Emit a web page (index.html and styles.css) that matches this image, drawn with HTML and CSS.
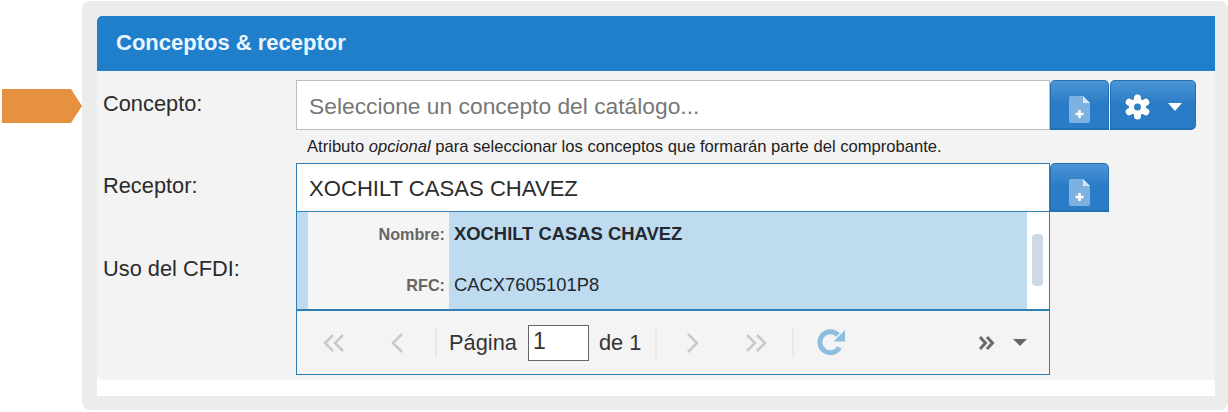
FILE: index.html
```html
<!DOCTYPE html>
<html lang="es-MX">

    <head>

        <meta charset="UTF-8">
        <meta name="viewport" content="width=device-width, initial-scale=1.0">

        <title>Conceptos &amp; receptor</title>

        <link rel="stylesheet" href="styles.css">

    </head>

    <body>

        <div class="arrow"></div>

        <div class="outer">

            <div class="panel">

                <div class="panel-header">Conceptos &amp; receptor</div>

                <div class="panel-body">

                    <div class="row row-concepto">
                        <label class="row-label">Concepto:</label>
                        <div class="input-group">
                            <div class="text-input placeholder">Seleccione un concepto del catálogo...</div>
                            <button class="btn btn-file" type="button">
                                <svg width="21" height="27" viewBox="0 0 21 27"><path d="M2 0H14L21 7V25Q21 27 19 27H2Q0 27 0 25V2Q0 0 2 0Z" fill="#7DB1DF"/><path d="M14 0L21 7H14Z" fill="#D5E6F5"/><path d="M10.5 14V22M6.500 18H14.500" stroke="#fff" stroke-width="2.600" fill="none"/></svg>
                            </button>
                            <button class="btn btn-gear" type="button">
                                <svg width="27" height="26" viewBox="0 0 27 26"><path d="M13.500 4V22M5.200 8.200L21.800 17.800M21.800 8.200L5.200 17.800" stroke="#fff" stroke-width="7" stroke-linecap="round"/><circle cx="13.500" cy="13" r="8.500" fill="#fff"/><circle cx="13.500" cy="13" r="3.500" fill="#2F7FC6"/></svg>
                                <span class="caret caret-white"></span>
                            </button>
                        </div>
                    </div>

                    <p class="hint">Atributo <em>opcional</em> para seleccionar los conceptos que formarán parte del comprobante.</p>

                    <div class="row row-receptor">
                        <label class="row-label">Receptor:</label>
                        <div class="input-group">
                            <div class="text-input text-active">XOCHILT CASAS CHAVEZ</div>
                            <button class="btn btn-file" type="button">
                                <svg width="21" height="27" viewBox="0 0 21 27"><path d="M2 0H14L21 7V25Q21 27 19 27H2Q0 27 0 25V2Q0 0 2 0Z" fill="#7DB1DF"/><path d="M14 0L21 7H14Z" fill="#D5E6F5"/><path d="M10.5 14V22M6.500 18H14.500" stroke="#fff" stroke-width="2.600" fill="none"/></svg>
                            </button>

                            <div class="dropdown">
                                <div class="dropdown-list">
                                    <div class="dropdown-strip"></div>
                                    <div class="dropdown-keys">
                                        <span class="key">Nombre:</span>
                                        <span class="key key-rfc">RFC:</span>
                                    </div>
                                    <div class="dropdown-values">
                                        <span class="value value-name">XOCHILT CASAS CHAVEZ</span>
                                        <span class="value value-rfc">CACX7605101P8</span>
                                    </div>
                                    <div class="scrollbar"><div class="scroll-thumb"></div></div>
                                </div>
                                <div class="pager">
                                    <svg class="pg pg-first" width="22" height="20" viewBox="0 0 22 20"><path d="M10 2L2 10L10 18M20 2L12 10L20 18" class="chev"/></svg>
                                    <svg class="pg pg-prev" width="15" height="22" viewBox="0 0 15 22"><path d="M12 2L3 11L12 20" class="chev"/></svg>
                                    <span class="pg-sep sep-one"></span>
                                    <span class="pg-text">Página</span>
                                    <div class="pg-input">1</div>
                                    <span class="pg-text pg-de">de 1</span>
                                    <span class="pg-sep sep-two"></span>
                                    <svg class="pg pg-next" width="15" height="22" viewBox="0 0 15 22"><path d="M3 2L12 11L3 20" class="chev"/></svg>
                                    <svg class="pg pg-last" width="22" height="20" viewBox="0 0 22 20"><path d="M2 2L10 10L2 18M12 2L20 10L12 18" class="chev"/></svg>
                                    <span class="pg-sep sep-three"></span>
                                    <svg class="pg pg-refresh" width="29" height="27" viewBox="0 0 29 27"><path d="M22.500 18.500A10.500 10.500 0 1 1 21 6" fill="none" stroke="#8DBEDF" stroke-width="5"/><path d="M28 1V12.500H16.500Z" fill="#8DBEDF"/></svg>
                                    <svg class="pg pg-more" width="17" height="16" viewBox="0 0 17 16"><path d="M2 2L7.500 8L2 14M9 2L14.500 8L9 14" fill="none" stroke="#6A6A6A" stroke-width="3"/></svg>
                                    <span class="caret caret-gray"></span>
                                </div>
                            </div>
                        </div>
                    </div>

                    <div class="row row-uso">
                        <label class="row-label">Uso del CFDI:</label>
                    </div>

                </div>

            </div>

        </div>

    </body>

</html>
```

FILE: styles.css
```css
* {
    box-sizing: border-box;
}

body {
    background-color: #fff;
    font-family: "Liberation Sans", Arial, sans-serif;
    margin: 0;
    padding: 1px 0 0 2px;
    display: flex;
    align-items: flex-start;
    width: 1228px;
    height: 412px;
    overflow: hidden;
}

.arrow {
    width: 80px;
    height: 34px;
    margin-top: 88px;
    flex-shrink: 0;
    background-color: #E69140;
    clip-path: polygon(0 0, 69px 0, 100% 50%, 69px 100%, 0 100%);
}

.outer {
    flex: 1;
    height: 409px;
    padding: 15px 13px 14px 15px;
    background-color: #ECECEC;
    border-radius: 8px;
}

.panel {
    height: 380px;
    background-color: #fff;
}

.panel-header {
    height: 55px;
    padding-left: 19px;
    background-color: #1F7FCB;
    border-radius: 5px 0 0 0;
    color: #EAF6FF;
    font-size: 22px;
    font-weight: bold;
    line-height: 54px;
}

.panel-body {
    height: 309px;
    padding-top: 9px;
    background-color: #F3F3F3;
    border-radius: 0 0 0 5px;
}

.row {
    display: flex;
    align-items: flex-start;
}

.row-label {
    width: 199px;
    padding-left: 6px;
    color: #2B2B2B;
    font-size: 21.800px;
    line-height: 26px;
}

.row-concepto .row-label {
    padding-top: 11px;
}

.row-receptor .row-label {
    padding-top: 10px;
}

.row-uso {
    margin-top: 44px;
}

.input-group {
    position: relative;
    display: flex;
}

.text-input {
    width: 754px;
    padding-left: 12px;
    background-color: #fff;
}

.placeholder {
    height: 50px;
    border: 1px solid #BDBDBD;
    color: #777;
    font-size: 22.800px;
    line-height: 50px;
}

.text-active {
    height: 49px;
    border: 1px solid #2E7FB5;
    color: #2B2B2B;
    font-size: 22.100px;
    line-height: 50px;
}

.btn {
    display: flex;
    align-items: center;
    justify-content: center;
    padding: 0;
    background: linear-gradient(#4B94D6, #2A7BC5 50%, #2A7DC8);
    border: 1px solid #236FB1;
    border-bottom-width: 2px;
    border-radius: 5px 5px 0 0;
}

.btn-file {
    width: 59px;
    height: 50px;
    padding-top: 10px;
}

.row-receptor .btn-file {
    height: 49px;
}

.btn-gear {
    width: 86px;
    height: 50px;
    margin-left: 1px;
    gap: 17px;
    padding-top: 5px;
    border-radius: 5px 5px 5px 0;
}

.caret {
    display: block;
    width: 0;
    height: 0;
    border-left: 7px solid transparent;
    border-right: 7px solid transparent;
}

.caret-white {
    border-top: 8px solid #fff;
}

.caret-gray {
    border-top: 7px solid #666;
    margin-left: 18px;
}

.hint {
    margin: 7px 0 0 210px;
    height: 26px;
    color: #222;
    font-size: 16.600px;
    line-height: 20px;
}

/* lista del combo, queda encima de la fila de uso */
.dropdown {
    position: absolute;
    top: 48px;
    left: 0;
    width: 754px;
    height: 164px;
    display: flex;
    flex-direction: column;
    border: 1px solid #2E7FB5;
    background-color: #fff;
}

.dropdown-list {
    display: flex;
    height: 99px;
    border-bottom: 2px solid #2E7FB5;
}

.dropdown-strip {
    width: 11px;
    background-color: #BEDBF0;
}

.dropdown-keys {
    width: 141px;
    background-color: #F5F5F5;
    display: flex;
    flex-direction: column;
    align-items: flex-end;
    padding: 12px 4px 0 0;
}

.key {
    color: #666;
    font-size: 16.200px;
    font-weight: bold;
    line-height: 20px;
}

.key-rfc {
    margin-top: 31px;
}

.dropdown-values {
    width: 578px;
    background-color: #BEDBF0;
    display: flex;
    flex-direction: column;
    padding: 10px 0 0 5px;
}

.value {
    color: #24292F;
    font-size: 18.400px;
    line-height: 24px;
}

.value-name {
    font-weight: bold;
}

.value-rfc {
    margin-top: 27px;
}

.scrollbar {
    flex: 1;
    padding: 22px 6px 0 5px;
}

.scroll-thumb {
    height: 52px;
    background-color: #CDD9E5;
    border-radius: 4px;
}

.pager {
    flex: 1;
    display: flex;
    align-items: center;
    background-color: #F4F4F4;
    padding-left: 26px;
}

.chev {
    fill: none;
    stroke: #C9C9C9;
    stroke-width: 2.500;
}

.pg {
    flex-shrink: 0;
}

.pg-prev {
    margin-left: 45px;
}

.pg-sep {
    width: 2px;
    height: 30px;
    background-color: #E9E9E9;
}

.sep-one {
    margin-left: 30px;
}

.pg-text {
    color: #333;
    font-size: 21.800px;
    margin-left: 12px;
}

.pg-input {
    width: 61px;
    height: 36px;
    margin-left: 11px;
    padding-left: 4px;
    background-color: #fff;
    border: 1px solid #666;
    color: #333;
    font-size: 23px;
    line-height: 30px;
}

.pg-de {
    margin-left: 10px;
}

.sep-two {
    margin-left: 14px;
}

.pg-next {
    margin-left: 28px;
}

.pg-last {
    margin-left: 45px;
}

.sep-three {
    margin-left: 25px;
}

.pg-refresh {
    margin-left: 23px;
}

.pg-more {
    margin-left: 132px;
}
```
